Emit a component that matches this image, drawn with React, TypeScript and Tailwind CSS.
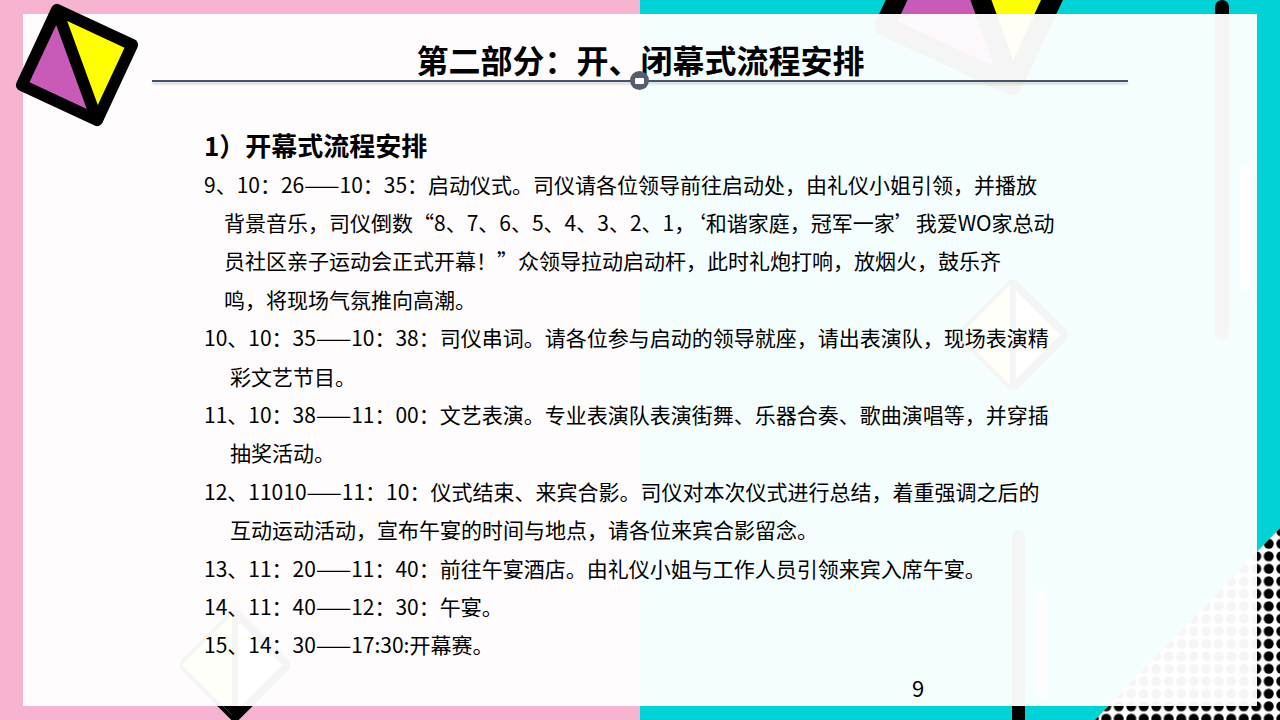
import React from "react";

const Logo = ({ size }: { size: number }) => (
  <svg width={size} height={size} viewBox="0 0 100 100">
    <g transform="rotate(25 50 50)">
      <polygon points="18,18 18,82 82,82" fill="#c95bb8" />
      <polygon points="18,18 82,18 82,82" fill="#ffff00" />
      <line x1="18" y1="18" x2="82" y2="82" stroke="#000" strokeWidth="9" />
      <rect x="18" y="18" width="64" height="64" fill="none" stroke="#000" strokeWidth="9" strokeLinejoin="round" />
    </g>
  </svg>
);

const Diamond = () => (
  <svg width="110" height="110" viewBox="0 0 110 110">
    <polygon points="55,2 108,55 55,108 2,55" fill="#fff9fd" stroke="#000" strokeWidth="8" />
    <polygon points="55,2 55,108 2,55" fill="#ffff80" />
    <line x1="55" y1="2" x2="55" y2="108" stroke="#000" strokeWidth="6" />
  </svg>
);

const lines: { t: string; indent?: number }[] = [
  { t: "9、10：26——10：35：启动仪式。司仪请各位领导前往启动处，由礼仪小姐引领，并播放" },
  { t: "背景音乐，司仪倒数“8、7、6、5、4、3、2、1，‘和谐家庭，冠军一家’我爱WO家总动", indent: 20 },
  { t: "员社区亲子运动会正式开幕！”众领导拉动启动杆，此时礼炮打响，放烟火，鼓乐齐", indent: 20 },
  { t: "鸣，将现场气氛推向高潮。", indent: 20 },
  { t: "10、10：35——10：38：司仪串词。请各位参与启动的领导就座，请出表演队，现场表演精" },
  { t: "彩文艺节目。", indent: 26 },
  { t: "11、10：38——11：00：文艺表演。专业表演队表演街舞、乐器合奏、歌曲演唱等，并穿插" },
  { t: "抽奖活动。", indent: 26 },
  { t: "12、11010——11：10：仪式结束、来宾合影。司仪对本次仪式进行总结，着重强调之后的" },
  { t: "互动运动活动，宣布午宴的时间与地点，请各位来宾合影留念。", indent: 26 },
  { t: "13、11：20——11：40：前往午宴酒店。由礼仪小姐与工作人员引领来宾入席午宴。" },
  { t: "14、11：40——12：30：午宴。" },
  { t: "15、14：30——17:30:开幕赛。" },
];

export default function App() {
  return (
    <div
      className="relative w-[1280px] h-[720px] overflow-hidden flex px-[23px] pt-[14px] pb-[14px]"
      style={{ background: "linear-gradient(90deg,#f6b4d0 0 640px,#00d2d6 640px 100%)", fontFamily: '"Noto Sans CJK SC","Noto Sans",sans-serif' }}
    >
      <div className="absolute left-[868px] top-[-118px] z-0"><Logo size={220} /></div>
      <div className="absolute left-[1215px] top-0 w-[14px] h-[340px] rounded-full bg-black z-0" />
      <div className="absolute left-[1240px] top-[165px] w-[12px] h-[125px] rounded-full bg-[#ddd] z-0" />
      <div className="absolute left-[1012px] top-[530px] w-[13px] h-[200px] rounded-full bg-black z-0" />
      <div className="absolute left-[1035px] top-[590px] w-[12px] h-[110px] rounded-full bg-[#ccc] z-0" />
      <div className="absolute left-[958px] top-[280px] z-0"><Diamond /></div>
      <div className="absolute left-[180px] top-[610px] z-0"><Diamond /></div>
      <svg className="absolute left-0 top-0 z-0" width="1280" height="720">
        <defs>
          <pattern id="dots" x="0" y="0" width="12.5" height="12.5" patternUnits="userSpaceOnUse">
            <circle cx="6.25" cy="6.25" r="5" fill="#000" />
          </pattern>
          <clipPath id="tri"><polygon points="1280,528 1280,720 1095,720" /></clipPath>
        </defs>
        <polygon points="1280,528 1280,720 1095,720" fill="#fff" />
        <rect x="1090" y="520" width="190" height="200" fill="url(#dots)" clipPath="url(#tri)" />
      </svg>

      <div className="relative z-10 flex-1 bg-white/[0.96] flex flex-col">
        <div className="flex justify-center pt-[24px] pl-[1px]">
          <h1 className="text-[32px] font-bold leading-[42px] text-black">第二部分：开、闭幕式流程安排</h1>
        </div>
        <div className="relative mx-[129px] mt-[0px] h-[1.5px] bg-[#44546a] shadow-[0_2px_3px_rgba(0,0,0,0.2)]">
          <div className="absolute left-[478px] top-[-9px] w-[19px] h-[19px] rounded-full bg-[#555d6e] flex items-center justify-center">
            <div className="w-[9px] h-[6px] bg-white rounded-[1px]" />
          </div>
        </div>
        <div className="pl-[181px] pt-[45px] text-black">
          <div className="text-[26px] font-bold leading-[36px] mb-[2px]">1）开幕式流程安排</div>
          {lines.map((l, i) => (
            <div key={i} className="text-[21px] leading-[38.4px] whitespace-nowrap" style={{ paddingLeft: l.indent ?? 0 }}>
              {l.t}
            </div>
          ))}
        </div>
        <div className="absolute left-[889px] top-[658px] text-[22px] leading-[30px] text-black">9</div>
      </div>

      <div className="absolute left-[12px] top-[0px] z-20"><Logo size={130} /></div>
      <div className="absolute left-[223px] top-[706px] z-20 w-0 h-0 border-l-[12px] border-r-[12px] border-t-[12px] border-l-transparent border-r-transparent border-t-black" />
    </div>
  );
}
